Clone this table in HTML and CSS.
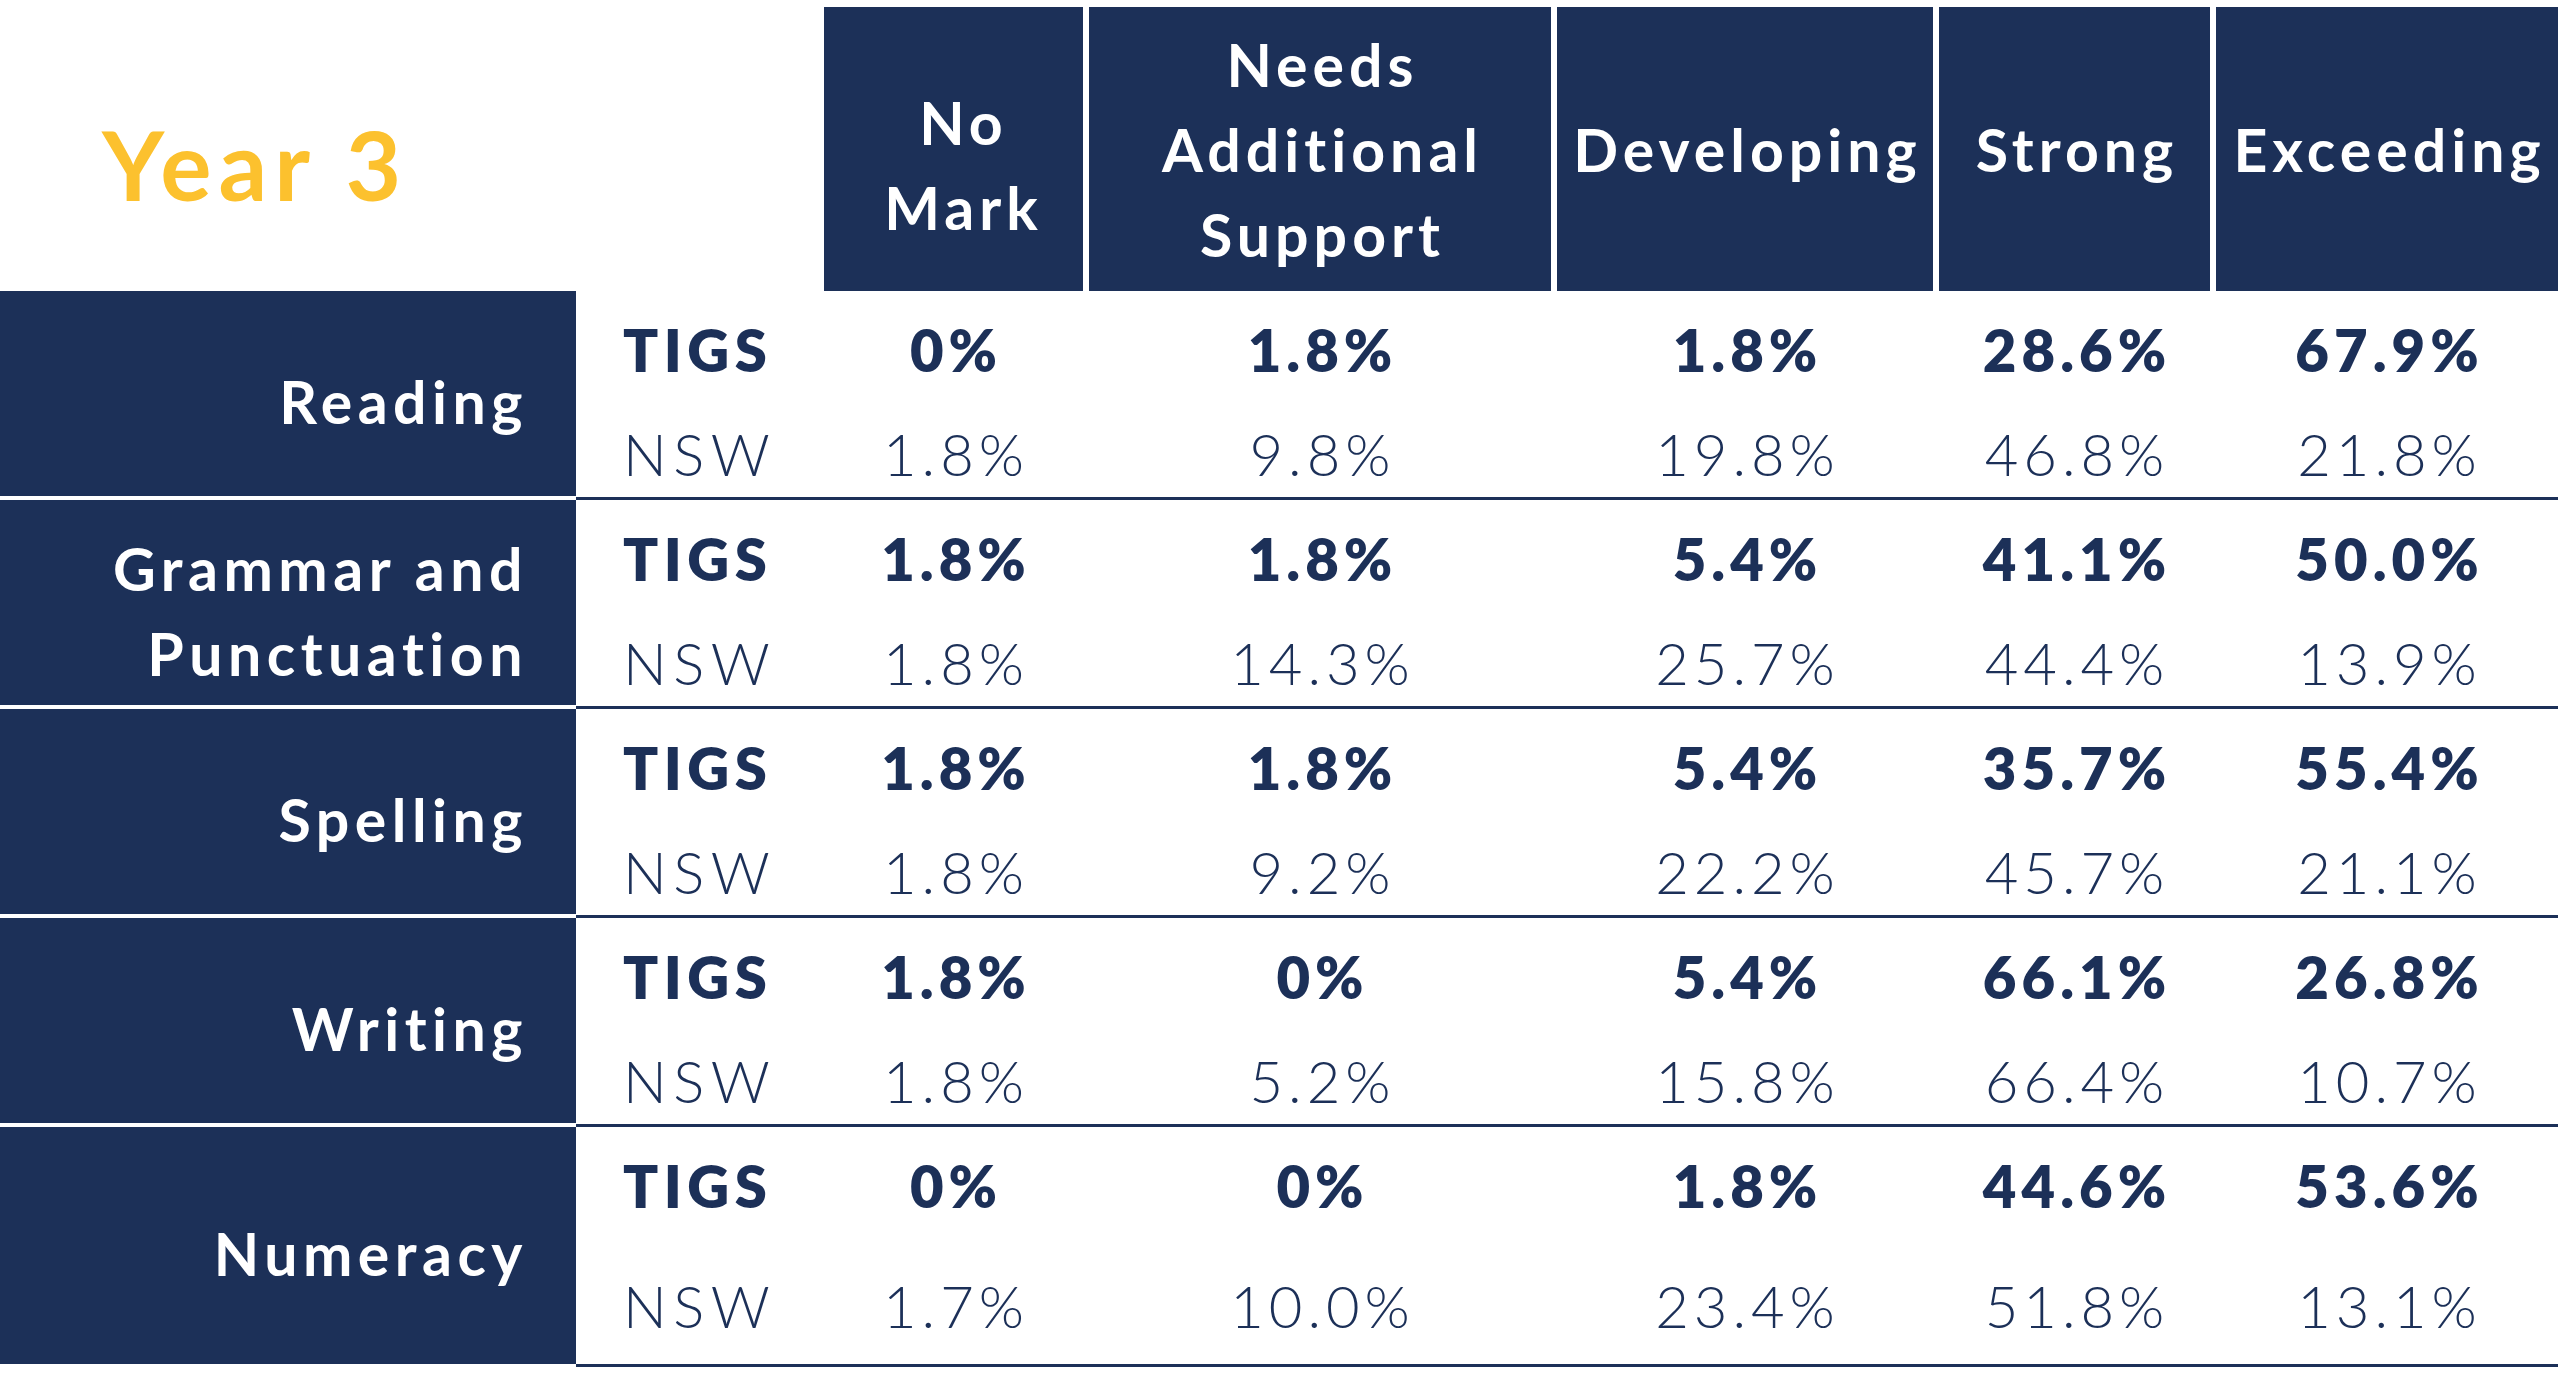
FILE: index.html
```html
<!DOCTYPE html>
<html lang="en">
<head>
<meta charset="utf-8">
<title>Year 3 NAPLAN results</title>
<link rel="stylesheet" href="styles.css">
</head>
<body>
<div class="table">
  <div class="head">
    <div class="title">Year 3</div>
    <div class="hcell nomark">No<br>Mark</div>
    <div class="hcell">Needs<br>Additional<br>Support</div>
    <div class="hcell">Developing</div>
    <div class="hcell">Strong</div>
    <div class="hcell">Exceeding</div>
  </div>

  <div class="row">
    <div class="label">Reading</div>
    <div class="data">
      <div class="type b">TIGS</div><div class="v b">0%</div><div class="v b">1.8%</div><div class="v b">1.8%</div><div class="v b">28.6%</div><div class="v b">67.9%</div>
      <div class="type l">NSW</div><div class="v l">1.8%</div><div class="v l">9.8%</div><div class="v l">19.8%</div><div class="v l">46.8%</div><div class="v l">21.8%</div>
    </div>
  </div>

  <div class="row">
    <div class="label">Grammar and<br>Punctuation</div>
    <div class="data">
      <div class="type b">TIGS</div><div class="v b">1.8%</div><div class="v b">1.8%</div><div class="v b">5.4%</div><div class="v b">41.1%</div><div class="v b">50.0%</div>
      <div class="type l">NSW</div><div class="v l">1.8%</div><div class="v l">14.3%</div><div class="v l">25.7%</div><div class="v l">44.4%</div><div class="v l">13.9%</div>
    </div>
  </div>

  <div class="row">
    <div class="label">Spelling</div>
    <div class="data">
      <div class="type b">TIGS</div><div class="v b">1.8%</div><div class="v b">1.8%</div><div class="v b">5.4%</div><div class="v b">35.7%</div><div class="v b">55.4%</div>
      <div class="type l">NSW</div><div class="v l">1.8%</div><div class="v l">9.2%</div><div class="v l">22.2%</div><div class="v l">45.7%</div><div class="v l">21.1%</div>
    </div>
  </div>

  <div class="row">
    <div class="label">Writing</div>
    <div class="data">
      <div class="type b">TIGS</div><div class="v b">1.8%</div><div class="v b">0%</div><div class="v b">5.4%</div><div class="v b">66.1%</div><div class="v b">26.8%</div>
      <div class="type l">NSW</div><div class="v l">1.8%</div><div class="v l">5.2%</div><div class="v l">15.8%</div><div class="v l">66.4%</div><div class="v l">10.7%</div>
    </div>
  </div>

  <div class="row last">
    <div class="label">Numeracy</div>
    <div class="data">
      <div class="type b">TIGS</div><div class="v b">0%</div><div class="v b">0%</div><div class="v b">1.8%</div><div class="v b">44.6%</div><div class="v b">53.6%</div>
      <div class="type l">NSW</div><div class="v l">1.7%</div><div class="v l">10.0%</div><div class="v l">23.4%</div><div class="v l">51.8%</div><div class="v l">13.1%</div>
    </div>
  </div>
</div>
</body>
</html>
```
FILE: styles.css
```css
html, body {
  margin: 0;
  padding: 0;
  background: #ffffff;
}
body {
  font-family: "Lato", "Open Sans", sans-serif;
  color: #1c3058;
}
.table {
  width: 2558px;
  padding-top: 7px;
}
.head {
  display: grid;
  grid-template-columns: 818px 259px 462px 376px 271px 342px;
  column-gap: 6px;
  height: 284px;
}
.title {
  display: flex;
  align-items: center;
  padding-left: 102px;
  padding-top: 28px;
  font-size: 96px;
  font-weight: 700;
  letter-spacing: 7px;
  color: #fcc12e;
}
.hcell {
  background: #1c3058;
  color: #ffffff;
  display: flex;
  align-items: center;
  justify-content: center;
  text-align: center;
  font-size: 59px;
  font-weight: 700;
  line-height: 85px;
  letter-spacing: 5px;
  padding-left: 5px;
}
.hcell.nomark {
  padding-left: 20px;
  padding-top: 32px;
}
.row {
  display: grid;
  grid-template-columns: 576px 1fr;
  height: 209px;
}
.row.last {
  height: 240px;
}
.label {
  background: #1c3058;
  color: #ffffff;
  margin-bottom: 4px;
  display: flex;
  align-items: center;
  justify-content: flex-end;
  text-align: right;
  padding-right: 48px;
  padding-top: 16px;
  font-size: 59px;
  font-weight: 700;
  line-height: 85px;
  letter-spacing: 5.5px;
}
.row.last .label {
  margin-bottom: 3px;
}
.data {
  border-bottom: 3px solid #1c3058;
  display: grid;
  grid-template-columns: 242px 259px 462px 376px 271px 342px;
  grid-template-rows: 80px 80px;
  column-gap: 6px;
  row-gap: 24px;
  align-content: start;
  padding-top: 19px;
}
.row.last .data {
  row-gap: 40px;
}
.type {
  padding-left: 47px;
  font-size: 58px;
  line-height: 80px;
  letter-spacing: 5.5px;
}
.type.l {
  letter-spacing: 6.5px;
}
.v {
  text-align: center;
  font-size: 58px;
  line-height: 80px;
  letter-spacing: 5px;
  padding-left: 5px;
}
.b {
  font-weight: 800;
}
.l {
  font-weight: 300;
}
```
